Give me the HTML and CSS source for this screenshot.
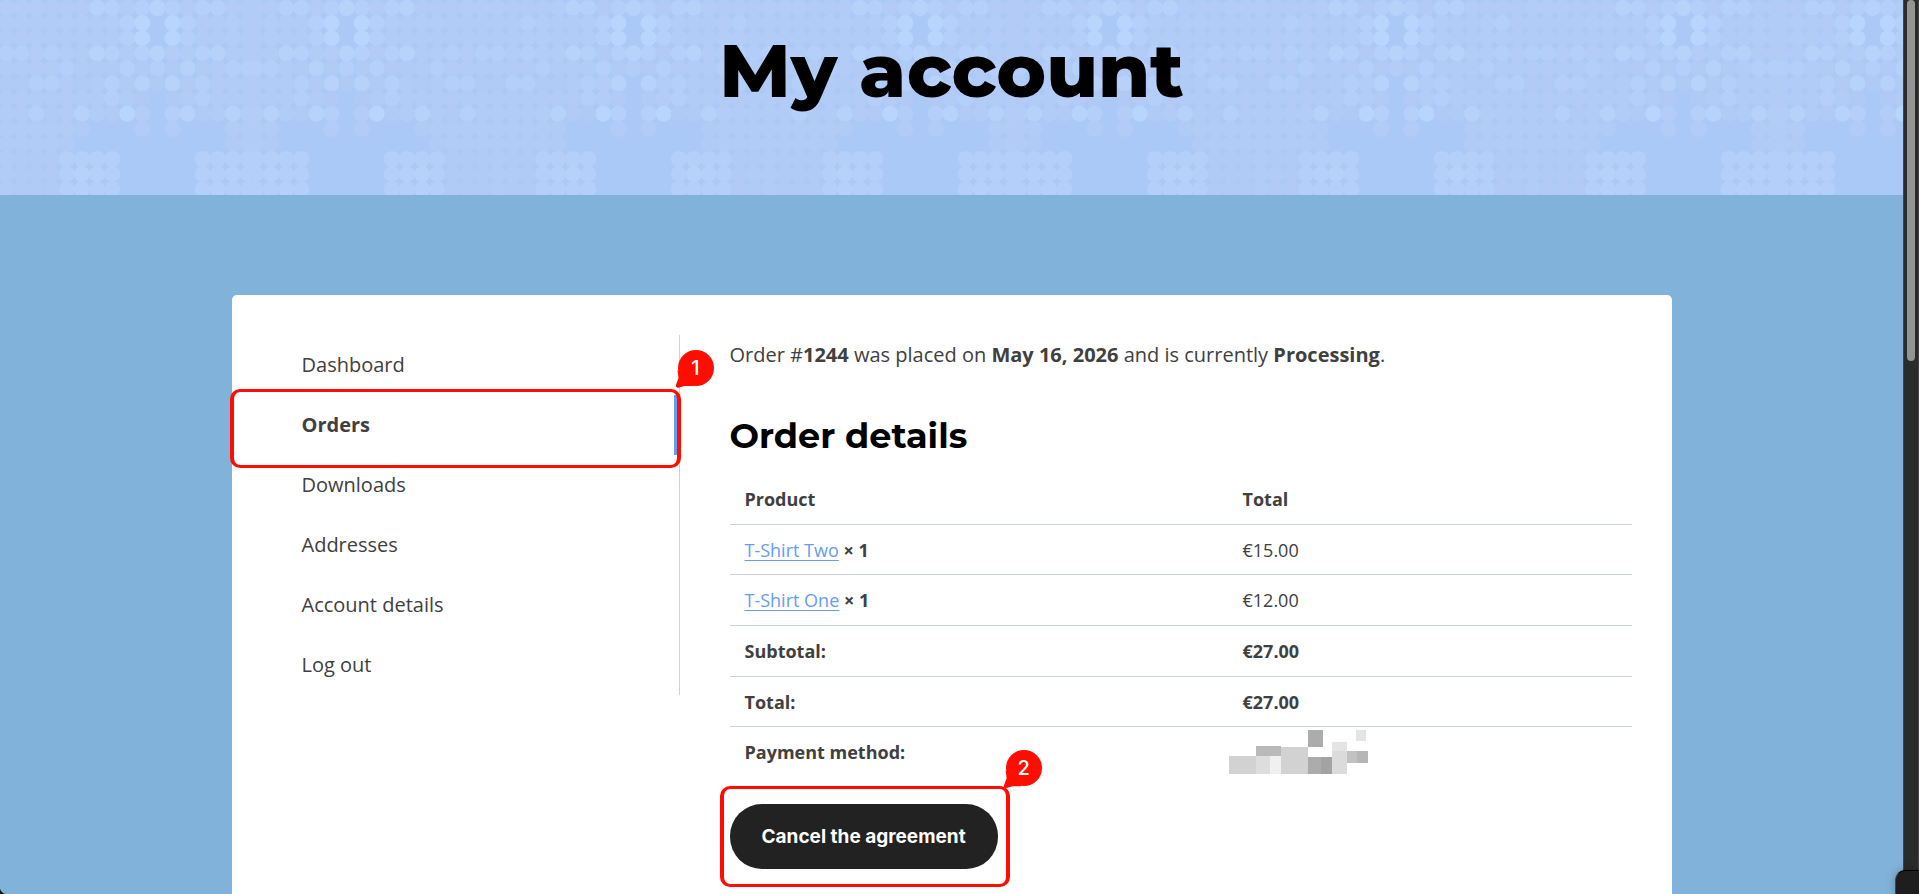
FILE: index.html
```html
<!DOCTYPE html>
<html lang="en">
<head>
  <meta charset="UTF-8" />
  <meta name="viewport" content="width=device-width, initial-scale=1.0" />
  <title>My account</title>
  <link rel="stylesheet" href="styles.css">
</head>
<body>
  <div class="page">
    <header class="hero">
      <svg class="hero-dots" aria-hidden="true">
        <defs>
          <pattern id="dots" x="252" y="0" width="763" height="195" patternUnits="userSpaceOnUse"></pattern>
        </defs>
        <rect width="100%" height="100%" fill="url(#dots)" />
      </svg>
      <h1 class="hero-title">My account</h1>
    </header>

    <main class="card">
      <nav class="account-nav">
        <ul>
          <li><a href="#">Dashboard</a></li>
          <li class="active">
            <a href="#">Orders</a>
            <span class="callout callout-nav"></span>
            <span class="marker marker-nav">1</span>
          </li>
          <li><a href="#">Downloads</a></li>
          <li><a href="#">Addresses</a></li>
          <li><a href="#">Account details</a></li>
          <li><a href="#">Log out</a></li>
        </ul>
      </nav>

      <section class="account-content">
        <p class="order-status">Order #<b>1244</b> was placed on <b>May 16, 2026</b> and is currently <b>Processing</b>.</p>
        <h2 class="section-title">Order details</h2>
        <table class="order-table">
          <thead>
            <tr><th scope="col">Product</th><th scope="col">Total</th></tr>
          </thead>
          <tbody>
            <tr><td><a href="#">T-Shirt Two</a> <b>× 1</b></td><td>€15.00</td></tr>
            <tr><td><a href="#">T-Shirt One</a> <b>× 1</b></td><td>€12.00</td></tr>
          </tbody>
          <tfoot>
            <tr><th scope="row">Subtotal:</th><td>€27.00</td></tr>
            <tr><th scope="row">Total:</th><td>€27.00</td></tr>
            <tr>
              <th scope="row">Payment method:</th>
              <td class="redacted">
                <svg width="139" height="44" aria-hidden="true" shape-rendering="crispEdges">
                  <rect x="0" y="26" width="27" height="18" fill="#d2d2d2" />
                  <rect x="27" y="16" width="25" height="10" fill="#b9b9b9" />
                  <rect x="27" y="26" width="14" height="18" fill="#dddddd" />
                  <rect x="41" y="26" width="11" height="18" fill="#f0f0f0" />
                  <rect x="52" y="17" width="27" height="27" fill="#d2d2d2" />
                  <rect x="79" y="0" width="15" height="17" fill="#acacac" />
                  <rect x="79" y="27" width="13" height="17" fill="#acacac" />
                  <rect x="92" y="27" width="11" height="17" fill="#a3a3a3" />
                  <rect x="103" y="12" width="15" height="9" fill="#e4e4e4" />
                  <rect x="103" y="21" width="15" height="23" fill="#dbdbdb" />
                  <rect x="118" y="21" width="10" height="12" fill="#c2c2c2" />
                  <rect x="128" y="21" width="11" height="12" fill="#b6b6b6" />
                  <rect x="127" y="0" width="10" height="11" fill="#e5e5e5" />
                </svg>
              </td>
            </tr>
          </tfoot>
        </table>
        <div class="actions">
          <button type="button" class="button-cancel">Cancel the agreement</button>
          <span class="callout callout-cancel"></span>
          <span class="marker marker-cancel">2</span>
        </div>
      </section>
    </main>
  </div>

  <div class="scrollbar"><div class="scrollbar-thumb"></div></div>
  <div class="corner corner-left"></div>
  <div class="corner corner-right"></div>

  <script src="dots.js"></script>
</body>
</html>
```

FILE: styles.css
```css
* {
  box-sizing: border-box;
}

body {
  margin: 0;
  min-height: 100vh;
  display: flex;
  background-color: #81b3da;
  color: #404040;
  font-family: "Open Sans", sans-serif;
  font-size: 20px;
}

.page {
  flex: 1;
  min-width: 0;
  display: flex;
  flex-direction: column;
}

/* Header */
.hero {
  position: relative;
  height: 195px;
  padding-top: 20px;
  background-color: #abc9f7;
  text-align: center;
}

.hero-dots {
  position: absolute;
  top: 0;
  left: 0;
  width: 100%;
  height: 100%;
}

.hero-title {
  position: relative;
  margin: 0;
  color: #000;
  font-family: Montserrat, Inter, sans-serif;
  font-size: 75px;
  font-weight: 800;
  line-height: 100px;
}

/* Card */
.card {
  flex: 1;
  display: flex;
  gap: 50px;
  width: 1440px;
  max-width: 100%;
  margin: 100px auto 0;
  padding: 40px 40px 0 0;
  background-color: #fff;
  border-radius: 5px 5px 0 0;
}

.account-nav {
  flex: 0 0 448px;
}

.account-nav ul {
  margin: 0;
  padding: 0;
  list-style: none;
  border-right: 1px solid #c9d3dd;
}

.account-nav li {
  position: relative;
  padding-left: 70px;
  line-height: 60px;
}

.account-nav a {
  display: block;
  color: inherit;
  text-decoration: none;
}

.account-nav .active a {
  border-right: 5px solid #659cf8;
  font-weight: 700;
}

.account-content {
  flex: 1;
}

.order-status {
  margin: 0;
  line-height: 40px;
}

.section-title {
  margin: 34px 0 11px;
  color: #000;
  font-family: Montserrat, Inter, sans-serif;
  font-size: 35px;
  font-weight: 700;
  line-height: 54px;
}

.order-table {
  width: 100%;
  border-spacing: 0;
  table-layout: fixed;
  font-size: 18px;
  line-height: 1.65;
}

.order-table th,
.order-table td {
  padding: 11px 15px 9px;
  text-align: left;
}

.order-table th:first-child {
  width: 498px;
}

.order-table tbody td,
.order-table tfoot th,
.order-table tfoot td {
  border-top: 1px solid #c8d5e1;
}

.order-table tfoot td {
  font-weight: 700;
}

.order-table a {
  color: #659cf8;
  text-underline-offset: 3px;
}

.order-table .redacted {
  padding: 3px 0 0 1px;
  vertical-align: top;
}

.redacted svg {
  display: block;
}

.actions {
  position: relative;
  width: max-content;
  margin-top: 27px;
}

.button-cancel {
  display: block;
  height: 65px;
  padding: 0 32px;
  border: none;
  border-radius: 32px;
  background-color: #222;
  color: #fff;
  font-family: Inter, sans-serif;
  font-size: 19px;
  font-weight: 700;
  cursor: pointer;
}

/* Red annotations */
.callout {
  position: absolute;
  border: solid #ff0d00;
  border-width: 3px 4px;
  border-radius: 10px;
  pointer-events: none;
}

.callout-nav {
  inset: -6px -2px -13px -2px;
}

.callout-cancel {
  inset: -18px -12px -18px -10px;
}

.marker {
  position: absolute;
  width: 36px;
  height: 36px;
  border-radius: 50%;
  background-color: #ff0d00;
  color: #fff;
  font-family: Inter, sans-serif;
  font-size: 20px;
  font-weight: 500;
  line-height: 36px;
  text-align: center;
}

.marker::before {
  content: "";
  position: absolute;
  left: -2px;
  bottom: -2px;
  width: 18px;
  height: 18px;
  background-color: #ff0d00;
  clip-path: polygon(2px 0, 3px 8px, 0 16px, 2px 18px, 9px 16px, 18px 16px);
}

.marker-nav {
  top: -45px;
  right: -35px;
}

.marker-cancel {
  top: -54px;
  right: -44px;
}

/* Window frame */
.scrollbar {
  flex: 0 0 15px;
  padding: 0 3px;
  border-left: 1px solid #444;
  border-right: 1px solid #444;
  background-color: #2b2b2b;
}

.scrollbar-thumb {
  width: 8px;
  height: 361px;
  border-radius: 4px;
  background-color: #949494;
}

.corner {
  position: fixed;
  bottom: 0;
}

.corner-left {
  left: 0;
  width: 8px;
  height: 8px;
  background: radial-gradient(circle at 100% 0, transparent 8px, #101808 9px);
}

.corner-right {
  right: 0;
  width: 24px;
  height: 24px;
  border-top: 1px solid #000;
  border-left: 1px solid #444;
  border-radius: 10px 0 0 0;
  background-color: #1e1e1e;
  box-shadow: 0 0 10px rgba(0, 0, 0, 0.25);
}
```

FILE: dots.js
```js
// Brightness of each dot, one string per row, from the mirror line outwards
const rows = [
  '75267433344433376358536633',
  '09643345333334434690963343',
  '09643344333333333590953343',
  '86268445455454386368436733',
  '42633353333335322625272355',
  '08453225522553236271825333',
  '02453333333333335310135333',
  '06912743333623732940582374',
  '03000233333333200030300033',
  '00000233333332000000000023',
  '00055552232225555000005555',
  '00057652332225765000005565',
  '00055552232225655000005655'
];

const pitch = 15.1;
const center = 381.5;
let circles = '';

rows.forEach((row, r) => {
  const y = 8 + r * pitch;
  [...row].forEach((level, k) => {
    if (level === '0') return;
    const sides = k === 0 ? [0] : [-k, k];
    for (const side of sides) {
      const x = center + side * pitch;
      const n = Number(level);
      const color = `rgb(${175 + n}, ${Math.round(199 + n * 1.5)}, ${244 + n})`;
      circles += `<circle cx="${x}" cy="${y}" r="8" fill="${color}" />`;
    }
  });
});

document.getElementById('dots').innerHTML = circles;
```
